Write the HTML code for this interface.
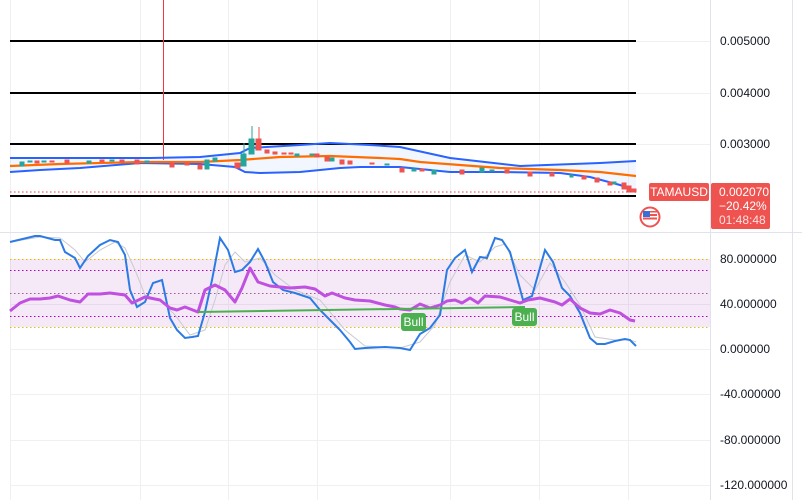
<!DOCTYPE html>
<html><head><meta charset="utf-8"><style>
html,body{margin:0;padding:0;background:#fff;width:802px;height:500px;overflow:hidden}
text{font-family:"Liberation Sans",sans-serif}
</style></head><body>
<svg width="802" height="500" viewBox="0 0 802 500" xmlns="http://www.w3.org/2000/svg">
<rect width="802" height="500" fill="#fff"/>
<g stroke="#eef0f3" stroke-width="1">
<line x1="10.5" y1="0" x2="10.5" y2="500"/>
<line x1="140.5" y1="0" x2="140.5" y2="500"/>
<line x1="228.5" y1="0" x2="228.5" y2="500"/>
<line x1="317.5" y1="0" x2="317.5" y2="500"/>
<line x1="450.5" y1="0" x2="450.5" y2="500"/>
<line x1="539.5" y1="0" x2="539.5" y2="500"/>
<line x1="628.5" y1="0" x2="628.5" y2="500"/>
<line x1="10" y1="41.5" x2="710" y2="41.5"/>
<line x1="10" y1="93.5" x2="710" y2="93.5"/>
<line x1="10" y1="144.5" x2="710" y2="144.5"/>
<line x1="10" y1="349.5" x2="710" y2="349.5"/>
<line x1="10" y1="394.5" x2="710" y2="394.5"/>
<line x1="10" y1="440.5" x2="710" y2="440.5"/>
<line x1="10" y1="485.5" x2="710" y2="485.5"/>
<line x1="10" y1="304.5" x2="710" y2="304.5"/>
</g>
<line x1="0" y1="232.5" x2="802" y2="232.5" stroke="#e0e3eb"/>
<line x1="710.5" y1="0" x2="710.5" y2="500" stroke="#e0e3eb"/>
<line x1="792.5" y1="0" x2="792.5" y2="500" stroke="#e0e3eb"/>
<g stroke="#000" stroke-width="2">
<line x1="10" y1="41" x2="636" y2="41"/>
<line x1="10" y1="93" x2="636" y2="93"/>
<line x1="10" y1="144" x2="636" y2="144"/>
<line x1="10" y1="196" x2="636" y2="196"/>
</g>
<rect x="163" y="0" width="1" height="160" fill="#f23645" shape-rendering="crispEdges"/>
<polygon fill="#2962ff" fill-opacity="0.06" points="10,158 60,158 150,158 200,157 240,153 250,148 300,145 330,143 370,145 400,147 450,158 520,166 600,163 636,161 636,192 620,185 590,177 560,173 500,172 450,172 400,167 360,167 340,168 300,172 260,173 245,172 235,167 200,164 140,163 80,168 40,170 10,172"/>
<polyline fill="none" stroke="#2962ff" stroke-width="2" points="10,158 60,158 150,158 200,157 240,153 250,148 300,145 330,143 370,145 400,147 450,158 520,166 600,163 636,161"/>
<polyline fill="none" stroke="#2962ff" stroke-width="2" points="10,172 40,170 80,168 140,163 200,164 235,167 245,172 260,173 300,172 340,168 360,167 400,167 450,172 500,172 560,173 590,177 620,185 636,192"/>
<polyline fill="none" stroke="#ff6d00" stroke-width="2.2" points="10,166 60,164 140,162 200,162 240,160 280,157 330,156 380,158 400,159 420,162 500,168 560,170 600,172 636,176"/>
<g fill="#26a69a" stroke="#26a69a">
<rect x="20" y="162" width="4" height="4"/><rect x="28" y="161" width="4" height="1"/><rect x="42" y="161" width="4" height="1"/><rect x="87" y="161" width="4" height="2"/><rect x="110" y="160" width="4" height="1"/>
<rect x="145" y="161" width="4" height="1"/>
<rect x="205" y="160" width="4" height="9"/><rect x="213" y="158" width="4" height="3"/>
<line x1="244" y1="143" x2="244" y2="166"/><rect x="241" y="154" width="5" height="12"/>
<line x1="252" y1="126" x2="252" y2="154"/><rect x="249" y="139" width="5" height="15"/>
<rect x="295" y="154" width="4" height="2"/><rect x="310" y="154" width="4" height="1"/><rect x="330" y="158" width="4" height="3"/>
<rect x="385" y="164" width="4" height="1"/><rect x="412" y="169" width="4" height="2"/>
<rect x="432" y="170" width="4" height="4"/><rect x="480" y="168" width="4" height="4"/><rect x="490" y="170" width="4" height="1"/>
<rect x="570" y="175" width="3" height="2"/><rect x="613" y="182" width="3" height="2"/>
</g>
<g fill="#ef5350" stroke="#ef5350">
<rect x="35" y="161" width="4" height="2"/><rect x="50" y="161" width="4" height="1"/>
<rect x="65" y="160" width="4" height="3"/><rect x="100" y="160" width="4" height="2"/><rect x="120" y="160" width="4" height="2"/><rect x="135" y="160" width="4" height="4"/>
<rect x="170" y="163" width="4" height="4"/><rect x="185" y="163" width="4" height="2"/><rect x="198" y="165" width="4" height="4"/>
<rect x="235" y="163" width="5" height="5"/>
<line x1="259" y1="127" x2="259" y2="150"/><rect x="256" y="139" width="5" height="11"/>
<rect x="265" y="150" width="4" height="3"/><rect x="273" y="152" width="4" height="2"/><rect x="282" y="153" width="4" height="1"/><rect x="289" y="153" width="4" height="1"/>
<rect x="315" y="154" width="4" height="3"/><rect x="325" y="157" width="4" height="4"/>
<rect x="340" y="160" width="4" height="4"/><rect x="348" y="161" width="4" height="3"/><rect x="370" y="163" width="4" height="1"/>
<rect x="400" y="168" width="4" height="4"/><rect x="420" y="169" width="4" height="2"/><rect x="460" y="170" width="4" height="4"/>
<rect x="505" y="170" width="4" height="3"/><rect x="528" y="172" width="4" height="4"/>
<rect x="550" y="173" width="4" height="3"/><rect x="582" y="176" width="4" height="3"/>
<rect x="595" y="178" width="4" height="4"/><rect x="608" y="182" width="4" height="3"/>
<rect x="622" y="183" width="4" height="6"/><rect x="627" y="186" width="4" height="6"/>
<rect x="632" y="189" width="4" height="3"/>
</g>
<line x1="10" y1="192" x2="636" y2="192" stroke="#f23645" stroke-dasharray="1.5 2.5"/>
<rect x="10" y="259" width="700" height="68" fill="#9c27b0" fill-opacity="0.1"/>
<g stroke-dasharray="1.5 2.5" stroke-width="1">
<line x1="10" y1="259.5" x2="710" y2="259.5" stroke="#e0c000"/>
<line x1="10" y1="327.5" x2="710" y2="327.5" stroke="#e0c000"/>
<line x1="10" y1="270.5" x2="710" y2="270.5" stroke="#b000c0"/>
<line x1="10" y1="293.5" x2="710" y2="293.5" stroke="#9c6090"/>
<line x1="10" y1="316.5" x2="710" y2="316.5" stroke="#b000c0"/>
</g>
<polyline fill="none" stroke="#c8cad0" stroke-width="1" points="10,242 40,237 60,238 75,250 85,262 100,250 115,242 125,248 135,270 145,295 160,300 175,315 190,335 205,330 215,300 225,265 235,252 245,262 260,258 275,275 295,290 320,300 345,330 365,346 400,348 420,342 435,325 450,282 465,255 480,262 495,247 505,244 520,275 535,290 550,263 565,282 580,305 595,337 615,340 630,340 636,342"/>
<polyline fill="none" stroke="#2c7be5" stroke-width="2" points="10,242 35,236 40,236 55,240 60,240 65,252 75,258 80,268 88,256 100,245 110,240 118,242 125,255 130,290 137,307 145,302 153,283 162,280 170,318 177,330 185,338 192,337 198,336 205,312 212,280 220,238 228,250 235,272 242,270 250,262 258,249 265,262 273,282 283,290 295,293 310,298 320,310 330,320 340,330 350,342 355,349 365,348 385,347 400,348 410,350 420,334 430,328 440,315 447,270 455,258 465,250 472,272 480,257 487,258 495,238 502,240 510,252 523,300 532,296 545,250 553,262 562,288 570,296 580,313 590,338 597,344 605,344 615,341 625,339 630,340 636,346"/>
<polyline fill="none" stroke="#c050e0" stroke-width="3" stroke-linejoin="round" points="10,311 20,303 30,299 40,299 50,298 58,296 70,300 80,302 88,294 100,294 110,293 125,295 132,303 145,297 160,300 170,308 177,310 185,307 198,312 205,290 215,285 225,290 235,302 242,288 250,268 258,282 270,286 290,288 305,287 315,289 325,296 332,293 345,298 355,300 370,301 385,305 395,307 400,309 410,310 420,304 430,308 440,305 447,301 455,300 462,303 470,298 478,303 485,296 500,297 510,300 520,303 528,300 540,298 555,302 562,305 570,299 580,308 590,313 600,314 610,310 620,313 630,320 635,321"/>
<line x1="198" y1="312" x2="525" y2="307" stroke="#4caf50" stroke-width="2"/>
<rect x="401" y="313" width="25" height="18" rx="3" fill="#4caf50"/>
<text x="413.5" y="326" font-size="12" fill="#fff" text-anchor="middle">Bull</text>
<rect x="512" y="308" width="25" height="18" rx="3" fill="#4caf50"/>
<text x="524.5" y="321" font-size="12" fill="#fff" text-anchor="middle">Bull</text>
<g font-size="12" fill="#131722">
<text x="720" y="45">0.005000</text>
<text x="720" y="97">0.004000</text>
<text x="720" y="148">0.003000</text>
<text x="720" y="263">80.000000</text>
<text x="720" y="308">40.000000</text>
<text x="720" y="353">0.000000</text>
<text x="720" y="398">-40.000000</text>
<text x="720" y="444">-80.000000</text>
<text x="720" y="489">-120.000000</text>
</g>
<rect x="649" y="183" width="60" height="18" rx="2" fill="#ef5350"/>
<text x="679" y="196" font-size="12" fill="#fff" text-anchor="middle">TAMAUSD</text>
<rect x="711" y="183" width="59" height="46" rx="2" fill="#ef5350"/>
<g font-size="12" fill="#fff"><text x="719" y="196">0.002070</text><text x="719" y="210">−20.42%</text><text x="719" y="224" fill="#ffe0e0">01:48:48</text></g>
<circle cx="650" cy="217" r="9.5" fill="#fff" stroke="#ef5350" stroke-width="2"/>
<rect x="643" y="211" width="14" height="10" fill="#ef5350"/>
<rect x="643" y="212.5" width="14" height="1.5" fill="#fff"/><rect x="643" y="216" width="14" height="1.5" fill="#fff"/><rect x="643" y="219.5" width="14" height="1.5" fill="#fff"/>
<rect x="643" y="211" width="7" height="6" fill="#3b6fd8"/>
</svg>
</body></html>
